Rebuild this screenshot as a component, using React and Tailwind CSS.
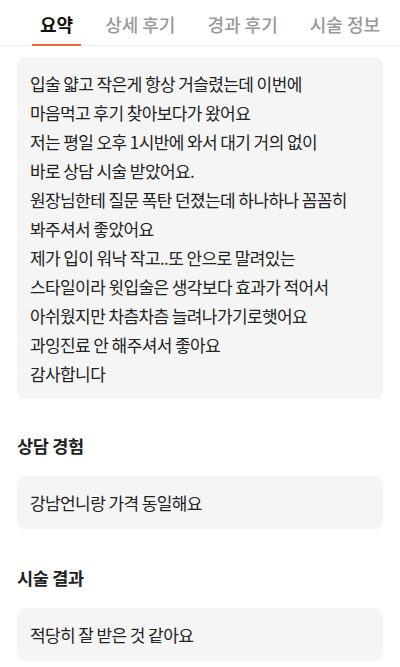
const tabs = ["요약", "상세 후기", "경과 후기", "시술 정보"];

const summary = [
  "입술 얇고 작은게 항상 거슬렸는데 이번에",
  "마음먹고 후기 찾아보다가 왔어요",
  "저는 평일 오후 1시반에 와서 대기 거의 없이",
  "바로 상담 시술 받았어요.",
  "원장님한테 질문 폭탄 던졌는데 하나하나 꼼꼼히",
  "봐주셔서 좋았어요",
  "제가 입이 워낙 작고..또 안으로 말려있는",
  "스타일이라 윗입술은 생각보다 효과가 적어서",
  "아쉬웠지만 차츰차츰 늘려나가기로햇어요",
  "과잉진료 안 해주셔서 좋아요",
  "감사합니다",
];

export default function App() {
  return (
    <div
      className="w-[400px] h-[667px] overflow-hidden bg-white text-[#222]"
      style={{ fontFamily: '"Noto Sans CJK KR", "Noto Sans", sans-serif' }}
    >
      {/* tabs */}
      <div className="flex h-[46px] border-b border-[#eeeeee] pl-[32px] gap-[16px] whitespace-nowrap">
        {tabs.map((t, i) => (
          <div
            key={t}
            className={`flex items-center px-2 pt-[5px] border-b-2 -mb-px text-[18px] ${
              i === 0 ? "border-[#f26a3b] font-bold text-[#111]" : "border-transparent text-[#999] font-medium"
            }`}
          >
            {t}
          </div>
        ))}
      </div>

      <div className="px-[17px] pt-[11px]">
        <div className="rounded-lg bg-[#f5f5f5] px-[13px] pt-3 pb-[11px] text-[17px] leading-[29px] tracking-[-0.6px] whitespace-nowrap">
          {summary.map((l, i) => (
            <div key={i}>{l}</div>
          ))}
        </div>

        <h3 className="mt-[35px] text-[17.5px] leading-[24px] font-bold tracking-[-0.3px]">상담 경험</h3>
        <div className="mt-[18px] rounded-lg bg-[#f5f5f5] px-[13px] py-3 text-[17px] leading-[29px] tracking-[-0.6px]">
          강남언니랑 가격 동일해요
        </div>

        <h3 className="mt-[37px] text-[17.5px] leading-[24px] font-bold tracking-[-0.3px]">시술 결과</h3>
        <div className="mt-[18px] rounded-lg bg-[#f5f5f5] px-[13px] py-3 text-[17px] leading-[29px] tracking-[-0.6px]">
          적당히 잘 받은 것 같아요
        </div>
      </div>
    </div>
  );
}
